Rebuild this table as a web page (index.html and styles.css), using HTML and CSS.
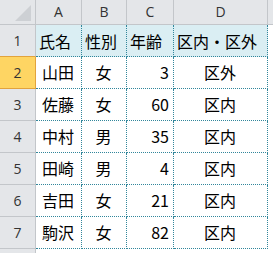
FILE: index.html
```html
<!DOCTYPE html>
<html lang="ja">
<head>
<meta charset="utf-8">
<link rel="stylesheet" href="styles.css">
</head>
<body>
<div class="sheet">
  <div class="corner"><span class="tri"></span></div>
  <div class="colh">A</div>
  <div class="colh">B</div>
  <div class="colh">C</div>
  <div class="colh">D</div>
  <div class="colh rest"></div>

  <div class="rowh sel-above">1</div>
  <div class="cell hd">氏名</div>
  <div class="cell hd">性別</div>
  <div class="cell hd">年齢</div>
  <div class="cell hd">区内・区外</div>
  <div class="blank"></div>

  <div class="rowh sel">2</div>
  <div class="cell c">山田</div>
  <div class="cell c">女</div>
  <div class="cell r">3</div>
  <div class="cell c">区外</div>
  <div class="blank"></div>

  <div class="rowh">3</div>
  <div class="cell c">佐藤</div>
  <div class="cell c">女</div>
  <div class="cell r">60</div>
  <div class="cell c">区内</div>
  <div class="blank"></div>

  <div class="rowh">4</div>
  <div class="cell c">中村</div>
  <div class="cell c">男</div>
  <div class="cell r">35</div>
  <div class="cell c">区内</div>
  <div class="blank"></div>

  <div class="rowh">5</div>
  <div class="cell c">田崎</div>
  <div class="cell c">男</div>
  <div class="cell r">4</div>
  <div class="cell c">区内</div>
  <div class="blank"></div>

  <div class="rowh">6</div>
  <div class="cell c">吉田</div>
  <div class="cell c">女</div>
  <div class="cell r">21</div>
  <div class="cell c">区内</div>
  <div class="blank"></div>

  <div class="rowh">7</div>
  <div class="cell c">駒沢</div>
  <div class="cell c">女</div>
  <div class="cell r">82</div>
  <div class="cell c">区内</div>
  <div class="blank"></div>

  <div class="rowh tail"></div>
  <div class="blank"></div>
  <div class="blank"></div>
  <div class="blank"></div>
  <div class="blank"></div>
  <div class="blank"></div>
</div>
</body>
</html>
```
FILE: styles.css
```css
html, body {
  margin: 0;
  padding: 0;
  background: #ffffff;
  overflow: hidden;
}
.sheet {
  display: grid;
  grid-template-columns: 36px 46px 45px 47px 94px 1fr;
  grid-template-rows: 25px repeat(7, 32px) 10px;
  width: 273px;
  height: 253px;
  font-family: "Noto Sans CJK JP", "Noto Sans", sans-serif;
  font-size: 16px;
  color: #000;
}
.sheet > div {
  box-sizing: border-box;
  display: flex;
  align-items: center;
  line-height: 1;
  white-space: nowrap;
  overflow: hidden;
}
.corner {
  background: #e4e6e9;
  border-right: 1px solid #c3c6ca;
  border-bottom: 1px solid #c3c6ca;
  position: relative;
}
.tri {
  position: absolute;
  left: 15px;
  top: 5px;
  width: 0;
  height: 0;
  border-left: 16px solid transparent;
  border-bottom: 16px solid #cdd0d4;
}
.colh {
  background: #e4e6e9;
  border-right: 1px solid #c3c6ca;
  border-bottom: 1px solid #c3c6ca;
  justify-content: center;
  font-family: "Open Sans", "Noto Sans", sans-serif;
  font-size: 14px;
  color: #333;
}
.colh.rest {
  border-right: none;
}
.rowh {
  background: #e4e6e9;
  border-right: 1px solid #c3c6ca;
  border-bottom: 1px solid #c3c6ca;
  justify-content: center;
  font-family: "Open Sans", "Noto Sans", sans-serif;
  font-size: 14px;
  color: #333;
  padding-left: 0;
}
.rowh.sel-above {
  border-bottom-color: #e2a33c;
}
.rowh.sel {
  background: #fed563;
  border-right-color: #e2a33c;
  border-bottom-color: #e2a33c;
}
.rowh.tail {
  border-bottom: none;
}
.cell {
  border-right: 1px dotted #31869b;
  border-bottom: 1px dotted #31869b;
  padding: 0 4px 0 3px;
}
.cell.hd {
  background: #daeef3;
  justify-content: flex-start;
}
.cell.c {
  justify-content: center;
  padding-bottom: 2px;
}
.cell.r {
  justify-content: flex-end;
  padding-bottom: 2px;
}
.blank {
  background: #fff;
}
```
